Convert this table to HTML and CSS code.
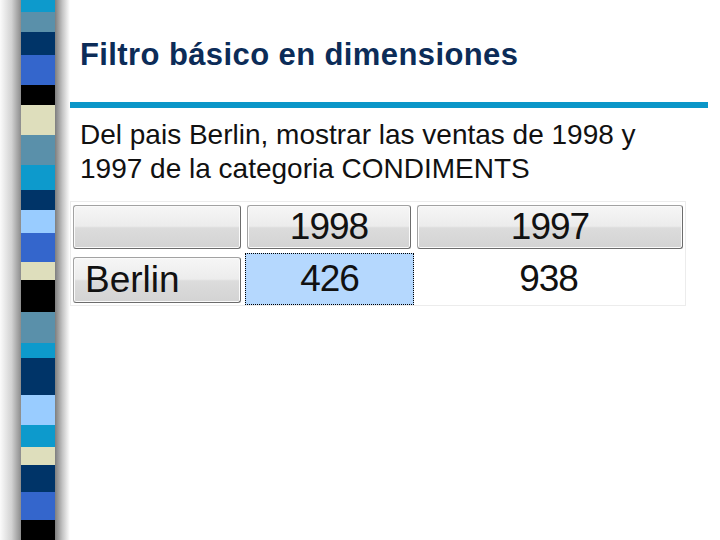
FILE: index.html
```html
<!DOCTYPE html>
<html lang="es">
<head>
    <meta charset="utf-8">
    <title>Filtro básico en dimensiones</title>
    <link rel="stylesheet" href="styles.css">
</head>
<body>
    <div class="slide">
        <div class="side">
            <div class="shadeL"></div>
            <div class="stripe"></div>
            <div class="shadeR"></div>
        </div>
        <div class="content">
            <h1 class="title">Filtro básico en dimensiones</h1>
            <div class="rule"></div>
            <p class="lead">Del pais Berlin, mostrar las ventas de 1998 y<br>1997 de la categoria CONDIMENTS</p>
            <div class="pivot">
                <div class="cell head"></div>
                <div class="cell head">1998</div>
                <div class="cell head">1997</div>
                <div class="cell head rowHead">Berlin</div>
                <div class="cell data sel">426</div>
                <div class="cell data">938</div>
            </div>
        </div>
    </div>
</body>
</html>
```

FILE: styles.css
```css
body{
    margin: 0;
    background-color: #fff;
    font-family: "Liberation Sans", Arial, sans-serif;
}
.slide{
    display: flex;
    flex-direction: row;
    width: 720px;
    height: 540px;
    overflow: hidden;
}
.side{
    display: flex;
    flex-direction: row;
    width: 70px;
    flex-shrink: 0;
}
.shadeL{
    width: 21px;
    background: linear-gradient(to right, #fbfbfb, #d2d2d2 55%, #8c8c8c);
}
.stripe{
    width: 34px;
    background: linear-gradient(to bottom,
        #0d9acc 0px, #0d9acc 12px,
        #5a90aa 12px, #5a90aa 32px,
        #003468 32px, #003468 55px,
        #3466cc 55px, #3466cc 85px,
        #000 85px, #000 105px,
        #dedebc 105px, #dedebc 135px,
        #5a90aa 135px, #5a90aa 165px,
        #0d9acc 165px, #0d9acc 190px,
        #003468 190px, #003468 210px,
        #99ccff 210px, #99ccff 233px,
        #3466cc 233px, #3466cc 262px,
        #dedebc 262px, #dedebc 280px,
        #000 280px, #000 312px,
        #5a90aa 312px, #5a90aa 343px,
        #0d9acc 343px, #0d9acc 358px,
        #003468 358px, #003468 395px,
        #99ccff 395px, #99ccff 425px,
        #0d9acc 425px, #0d9acc 447px,
        #dedebc 447px, #dedebc 465px,
        #003468 465px, #003468 492px,
        #3466cc 492px, #3466cc 520px,
        #000 520px, #000 540px);
}
.shadeR{
    width: 15px;
    background: linear-gradient(to right, #7e7e7e, #c4c4c4 50%, #fff);
}
.content{
    flex: 1;
    display: flex;
    flex-direction: column;
    align-items: flex-start;
    padding: 37px 12px 0 0;
}
.title{
    margin: 0;
    padding-left: 10px;
    font-size: 31px;
    line-height: 36px;
    font-weight: bold;
    color: #0c2c58;
    letter-spacing: 0.4px;
}
.rule{
    align-self: stretch;
    height: 6px;
    margin-top: 29px;
    background-color: #0b96c8;
}
.lead{
    margin: 10px 0 0 0;
    padding-left: 10px;
    font-size: 28px;
    line-height: 34px;
    color: #111;
}
.pivot{
    display: grid;
    grid-template-columns: 168px 164px 266px;
    grid-template-rows: 44px 46px;
    column-gap: 6px;
    row-gap: 8px;
    margin-top: 15px;
    padding: 3px 2px 2px 2px;
    border: 1px solid #ececec;
}
.cell{
    display: flex;
    align-items: center;
    justify-content: center;
    font-size: 37px;
    color: #111;
    letter-spacing: -1px;
}
.head{
    border: 1px solid #8c8c8c;
    border-color: #a2a2a2 #6c6c6c #6c6c6c #a2a2a2;
    border-radius: 3px;
    background: linear-gradient(to bottom, #f6f6f6 0%, #ececec 48%, #dcdcdc 52%, #d3d3d3 100%);
    box-shadow: inset 0 0 0 1px #fafafa;
}
.rowHead{
    justify-content: flex-start;
    padding-left: 11px;
    letter-spacing: 0;
}
.data{
    margin: -4px 0 -2px -3px;
}
.sel{
    margin-right: -3px;
    margin-left: -2px;
    background-color: #b5d8fe;
    border: 1px dotted #000;
}
```
